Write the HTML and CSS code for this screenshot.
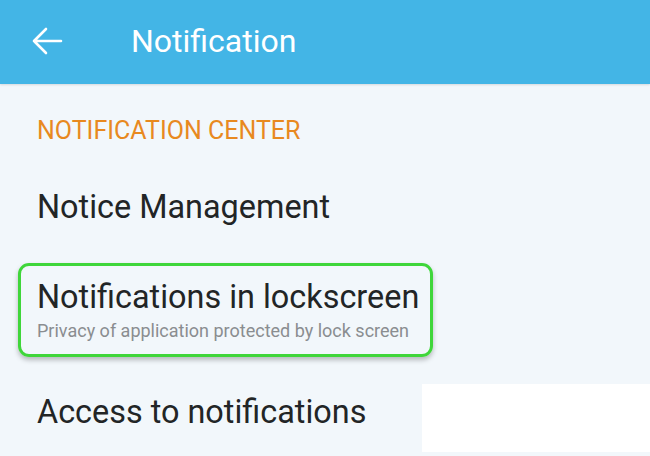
FILE: index.html
```html
<!DOCTYPE html>
<html>
<head>
<meta charset="utf-8">
<link rel="stylesheet" href="styles.css">
</head>
<body>
<div class="app">
  <header class="topbar">
    <svg class="back" width="32" height="30" viewBox="0 0 32 30">
      <path d="M30 15 H3 M15 3 L3 15 L15 27" fill="none" stroke="#ffffff" stroke-width="2.6" stroke-linecap="round" stroke-linejoin="round"/>
    </svg>
    <div class="title">Notification</div>
  </header>
  <main class="content">
    <div class="section">NOTIFICATION CENTER</div>
    <div class="item item-single">Notice Management</div>
    <div class="item item-double highlight">
      <div class="item-title">Notifications in lockscreen</div>
      <div class="item-sub">Privacy of application protected by lock screen</div>
    </div>
    <div class="item item-last">
      <div class="item-title">Access to notifications</div>
      <div class="patch"></div>
    </div>
  </main>
</div>
</body>
</html>
```
FILE: styles.css
```css
html, body {
  margin: 0;
  padding: 0;
}
body {
  width: 650px;
  height: 456px;
  overflow: hidden;
  background: #f2f7fb;
  font-family: Roboto, "Liberation Sans", sans-serif;
}
.app {
  display: flex;
  flex-direction: column;
  height: 456px;
}
.topbar {
  height: 84px;
  background: #43b5e6;
  display: flex;
  align-items: center;
  flex-shrink: 0;
  box-shadow: 0 1px 2px rgba(0,0,0,0.12);
}
.back {
  margin-left: 31px;
  margin-top: -2px;
}
.title {
  margin-left: 68px;
  color: #ffffff;
  font-size: 32px;
  margin-top: -2px;
}
.content {
  display: flex;
  flex-direction: column;
  padding-left: 37px;
}
.section {
  margin-top: 33px;
  color: #e8891f;
  font-size: 25px;
  line-height: 28px;
}
.item {
  color: #222526;
}
.item-single {
  margin-top: 42px;
  font-size: 32.4px;
  line-height: 40px;
}
.item-double {
  align-self: flex-start;
  margin-top: 36px;
  margin-left: -19px;
  padding: 11px 11px 12px 16px;
  border: 3px solid #3fd63a;
  border-radius: 11px;
  box-shadow: 0 3px 5px rgba(0,0,0,0.25);
}
.item-title {
  font-size: 32.4px;
  line-height: 40px;
}
.item-sub {
  font-size: 18px;
  line-height: 22px;
  color: #8a8d90;
  margin-top: 3px;
}
.item-last {
  margin-top: 35px;
  display: flex;
  align-items: flex-start;
  justify-content: space-between;
}
.patch {
  width: 228px;
  height: 68px;
  background: #ffffff;
  margin-top: -8px;
}
```
